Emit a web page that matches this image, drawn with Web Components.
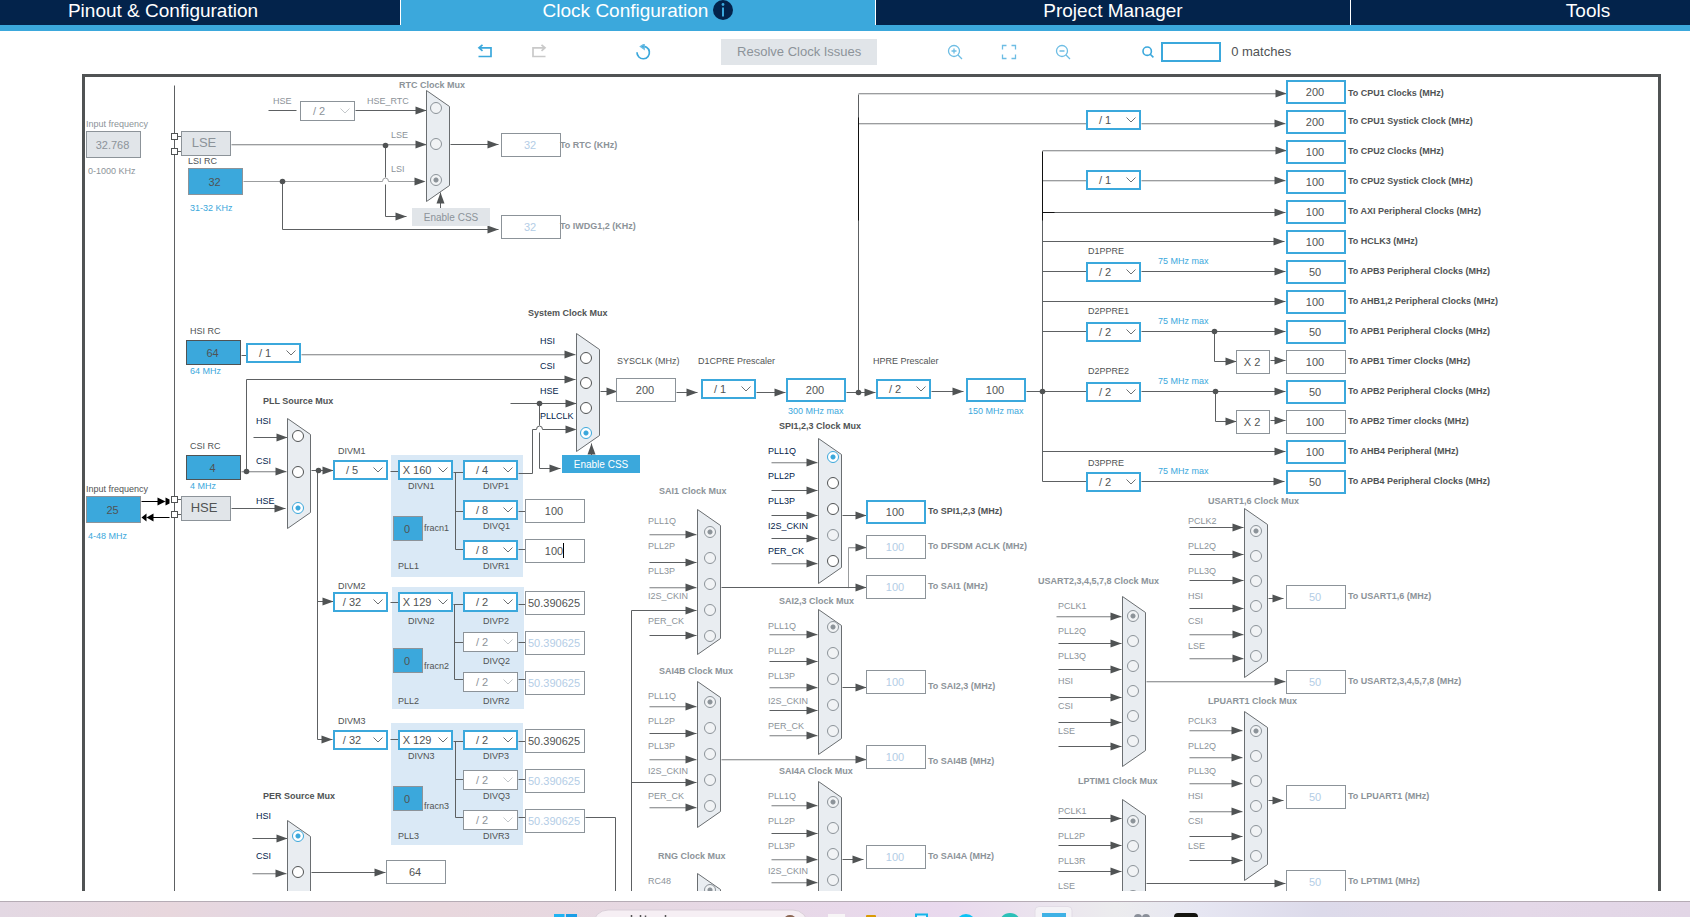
<!DOCTYPE html>
<html lang="en">
<head>
<meta charset="utf-8">
<title>Clock Configuration</title>
<style>
  body {
    margin: 0;
    height: 100vh;
    display: flex;
    flex-direction: column;
    overflow: hidden;
    background: #fff;
    font-family: "Liberation Sans", Arial, sans-serif;
    --navy: #03234b;
    --blue: #3ba8dc;
    --ink: #505354;
    --grey: #8c9399;
    --pale: #e1e5e9;
  }

  clock-diagram {
    flex: 1;
    min-height: 0;
  }

  task-bar {
    margin-top: 10px;
  }
</style>
</head>
<body>
  <clock-tabs>
    <clock-tab>Pinout &amp; Configuration</clock-tab>
    <clock-tab active info>Clock Configuration</clock-tab>
    <clock-tab>Project Manager</clock-tab>
    <clock-tab>Tools</clock-tab>
  </clock-tabs>
  <clock-toolbar></clock-toolbar>
  <clock-diagram></clock-diagram>
  <task-bar></task-bar>

<script>
// ---------------------------------------------------------------- tabs
class ClockTabs extends HTMLElement {
  constructor() {
    super();
    this.attachShadow({ mode: 'open' });
    // the tab strip is wider than the window and is scrolled a little
    this.shadowRoot.innerHTML = `
      <style>
        :host {
          display: block;
          flex: none;
          overflow: hidden;
          border-bottom: 6px solid var(--blue);
        }

        nav {
          display: grid;
          grid-template-columns: repeat(4, 1fr);
          width: calc(100% + 210px);
          height: 25px;
          margin-left: -74px;
        }
      </style>
      <nav aria-label="Configuration"><slot></slot></nav>
    `;
  }
}

class ClockTab extends HTMLElement {
  constructor() {
    super();
    this.attachShadow({ mode: 'open' });
    this.shadowRoot.innerHTML = `
      <style>
        :host {
          display: flex;
          border-right: 1px solid #fff;
          background: var(--navy);
        }

        :host([active]) {
          background: var(--blue);
        }

        button {
          flex: 1;
          display: flex;
          align-items: center;
          justify-content: center;
          gap: 5px;
          padding: 0 0 5px;
          border: 0;
          background: none;
          color: #fff;
          font: 19px/22px "Liberation Sans", Arial, sans-serif;
        }

        svg {
          display: none;
          margin-bottom: 2px;
        }

        :host([info]) svg {
          display: block;
        }
      </style>
      <button type="button">
        <span><slot></slot></span>
        <svg width="20" height="20" viewBox="0 0 20 20">
          <circle cx="10" cy="10" r="10" fill="#03234b"/>
          <circle cx="10" cy="4.5" r="1.4" fill="#3ba8dc"/>
          <path d="M10 7.5V16.5" stroke="#3ba8dc" stroke-width="2"/>
        </svg>
      </button>
    `;
  }
}

// ---------------------------------------------------------------- toolbar
const ICONS = {
  undo: '<path d="M2 3.8H14V12.5H1.5M5.5 .8L2 3.8L5.5 6.8" stroke="#3ba8dc" stroke-width="1.7"/>',
  redo: '<path d="M13 3.8H2V12.5H14.5M10.5 .8L14 3.8L10.5 6.8" stroke="#c9c9c9" stroke-width="1.7"/>',
  reset: '<path d="M6.5 2.6A6.2 6.2 0 1 1 2 8.3" stroke="#3ba8dc" stroke-width="1.7"/><path d="M9.2 0V5.2L5.4 2.6Z" fill="#3ba8dc"/>',
  zoomin: '<circle cx="7" cy="7" r="5.5"/><path d="M11 11L15 15M4.5 7H9.5M7 4.5V9.5"/>',
  fit: '<path d="M1.5 5.5V1.5H5.5M10.5 1.5H14.5V5.5M14.5 10.5V14.5H10.5M5.5 14.5H1.5V10.5"/>',
  zoomout: '<circle cx="7" cy="7" r="5.5"/><path d="M11 11L15 15M4.5 7H9.5"/>'
};

class IconButton extends HTMLElement {
  connectedCallback() {
    this.attachShadow({ mode: 'open' });
    this.shadowRoot.innerHTML = `
      <style>
        :host {
          display: block;
        }

        button {
          display: flex;
          justify-content: center;
          width: 22px;
          padding: 3px 0;
          border: 0;
          background: none;
        }
      </style>
      <button type="button" aria-label="${this.getAttribute('icon')}">
        <svg width="16" height="16" viewBox="0 0 16 16" fill="none" stroke="#6dbde4" stroke-width="1.3">
          ${ICONS[this.getAttribute('icon')]}
        </svg>
      </button>
    `;
  }
}

class ClockToolbar extends HTMLElement {
  constructor() {
    super();
    this.attachShadow({ mode: 'open' });
    this.shadowRoot.innerHTML = `
      <style>
        :host {
          flex: none;
          display: flex;
          align-items: center;
          gap: 67px;
          box-sizing: border-box;
          height: 42px;
          padding: 0 0 1px calc(28% + 1px);
          font-size: 13px;
          line-height: 16px;
          color: var(--ink);
        }

        .group {
          display: flex;
          gap: 32px;
        }

        .history {
          margin-right: 15px;
        }

        .resolve {
          width: 156px;
          height: 26px;
          padding: 0;
          border: 0;
          background: var(--pale);
          color: var(--grey);
          font: inherit;
        }

        .search {
          display: flex;
          align-items: center;
          gap: 10px;
        }

        .box {
          display: flex;
          align-items: center;
          gap: 7px;
        }

        label {
          display: flex;
        }

        input {
          box-sizing: border-box;
          width: 60px;
          height: 20px;
          margin: 0;
          padding: 0 4px;
          border: 2px solid var(--blue);
          border-radius: 0;
          font: inherit;
        }
      </style>
      <div class="group history">
        <icon-button icon="undo"></icon-button>
        <icon-button icon="redo"></icon-button>
      </div>
      <icon-button icon="reset"></icon-button>
      <button type="button" class="resolve" disabled>Resolve Clock Issues</button>
      <div class="group">
        <icon-button icon="zoomin"></icon-button>
        <icon-button icon="fit"></icon-button>
        <icon-button icon="zoomout"></icon-button>
      </div>
      <div class="search">
        <div class="box">
          <label for="find" aria-label="Search">
            <svg width="13" height="12" viewBox="0 0 13 12" fill="none" stroke="#3ba8dc" stroke-width="1.6">
              <circle cx="6.2" cy="5.2" r="4.2"/><path d="M9 8L12.4 11.4"/>
            </svg>
          </label>
          <input id="find" type="text">
        </div>
        <span>0 matches</span>
      </div>
    `;
  }
}

// ---------------------------------------------------------------- diagram parts

// shared by every part that carries captions around its box
const CAPTION_STYLE = `
  :host {
    position: absolute;
    display: block;
  }

  .caption {
    position: absolute;
    font-size: 9px;
    line-height: 12px;
    white-space: nowrap;
    color: var(--ink);
  }

  .bold {
    font-weight: bold;
  }

  .note {
    color: var(--blue);
  }

  .off {
    color: var(--grey);
  }
`;

// each part gets a config object before it is added to the sheet:
// { x, y, value, label: [text, x, y], note: [text, x, y], off, ... }
// label and note positions are sheet positions, y being the middle of the line
class SheetPart extends HTMLElement {
  connectedCallback() {
    if (this.shadowRoot) return;
    this.attachShadow({ mode: 'open' });
    this.shadowRoot.innerHTML = `<style>${CAPTION_STYLE}</style>` + this.markup(this.config);
  }

  caption(entry, classes, forId) {
    if (!entry) return '';
    const { x, y } = this.config;
    const tag = forId ? 'label' : 'span';
    return `<${tag} class="caption ${classes}" ${forId ? `for="${forId}"` : ''}
      style="left:${entry[1] - x}px;top:${entry[2] - 6 - y}px">${entry[0]}</${tag}>`;
  }
}

class ClockField extends SheetPart {
  markup(c) {
    const kind = c.kind || 'plain';
    return `
      <style>
        input {
          display: block;
          box-sizing: border-box;
          width: ${c.w || 60}px;
          height: ${c.h || 24}px;
          margin: 0;
          padding: 0 2px 0 0;
          border: 1px solid var(--grey);
          border-radius: 0;
          background: #fff;
          color: var(--ink);
          font: 11px/16px "Liberation Sans", Arial, sans-serif;
          text-align: center;
        }

        .live {
          border: 2px solid var(--blue);
        }

        .source {
          background: var(--blue);
        }

        .dark {
          border-color: var(--ink);
        }

        .idle {
          color: #b3cde6;
        }

        .shut {
          background: var(--pale);
          color: var(--grey);
        }

        .caret {
          position: absolute;
          left: 38px;
          top: 4px;
          width: 1px;
          height: 15px;
          background: #000;
        }
      </style>
      <input id="value" type="text" class="${kind}" value="${c.value}"
        ${c.label ? '' : 'aria-label="frequency"'} ${c.off ? 'disabled' : ''}>
      ${this.caption(c.label, (c.bold ? 'bold ' : '') + (c.off ? 'off' : ''), 'value')}
      ${this.caption(c.note, c.off ? 'off' : 'note')}
      ${c.caret ? '<i class="caret"></i>' : ''}
    `;
  }
}

class ClockDivider extends SheetPart {
  markup(c) {
    return `
      <style>
        select {
          display: block;
          box-sizing: border-box;
          width: 55px;
          height: 20px;
          margin: 0;
          padding: 1px 17px 0 0;
          appearance: none;
          border: 2px solid var(--blue);
          border-radius: 0;
          background: #fff;
          color: var(--ink);
          font: 11px/15px "Liberation Sans", Arial, sans-serif;
          text-align: center;
          text-align-last: center;
        }

        select:disabled {
          border: 1px solid var(--grey);
          color: var(--grey);
          opacity: 1;
        }

        svg {
          position: absolute;
          left: 40px;
          top: 7px;
          pointer-events: none;
        }
      </style>
      <select id="value" ${c.label ? '' : 'aria-label="divider"'} ${c.off ? 'disabled' : ''}>
        <option>${c.value}</option>
      </select>
      <svg width="10" height="6" viewBox="0 0 10 6">
        <path d="M.5 .5L5 5L9.5 .5" fill="none" stroke="${c.off ? '#c4c8cb' : '#6d7072'}"/>
      </svg>
      ${this.caption(c.label, c.labelOff ? 'off' : '', 'value')}
      ${this.caption(c.note, 'note')}
    `;
  }
}

class ClockButton extends SheetPart {
  markup(c) {
    return `
      <style>
        button {
          display: block;
          width: ${c.w}px;
          height: ${c.h}px;
          box-sizing: border-box;
          padding: 2px 0 0;
          border: 0;
          background: var(--pale);
          color: var(--grey);
          font: 10px/14px "Liberation Sans", Arial, sans-serif;
        }

        .live {
          background: var(--blue);
          color: #fff;
        }

        .source {
          padding: 0 4px 2px 0;
          border: 1px solid var(--grey);
          font-size: 13px;
        }

        .dark {
          color: var(--ink);
        }
      </style>
      <button type="button" class="${c.kind || ''}">${c.value}</button>
    `;
  }
}

class ClockLabel extends SheetPart {
  markup(c) {
    return `<span class="caption" style="top:-6px">${c.value}</span>`;
  }
}

class ClockMux extends SheetPart {
  markup(c) {
    const h = c.h;
    const { step, first, cx } = c.radio;
    const rows = c.inputs.map((text, i) => {
      const dead = c.off || c.dead === i;
      return `
        <input type="radio" name="source" id="in${i}" class="${dead ? 'dead' : ''}"
          style="left:${cx - 6 - c.x}px;top:${first + step * i - 6 - c.y}px"
          ${c.picked === i ? 'checked' : ''}>
        ${this.caption([text, c.textX[i] || c.textX[0], c.textY[0] + c.textY[1] * i], c.off ? 'off' : 'name', 'in' + i)}
      `;
    }).join('');
    return `
      <style>
        svg {
          display: block;
          overflow: visible;
        }

        input {
          position: absolute;
          box-sizing: border-box;
          appearance: none;
          width: 12px;
          height: 12px;
          margin: 0;
          border: 1px solid var(--ink);
          border-radius: 50%;
          background: #fff;
        }

        input:checked {
          border-color: var(--blue);
          background: radial-gradient(circle, var(--blue) 2px, #fff 3px);
        }

        input.dead {
          border-color: var(--grey);
          background: #f1f3f5;
        }

        input.dead:checked {
          background: radial-gradient(circle, var(--grey) 2px, #f1f3f5 3px);
        }

        .name {
          color: var(--navy);
        }
      </style>
      <svg width="24" height="${h}">
        <path d="M.5 .5L23.5 16.5V${h - 16.5}L.5 ${h - .5}Z" fill="#e9edf1" stroke="#6a6e71"/>
      </svg>
      ${rows}
      ${this.caption(c.title, 'bold ' + (c.off ? 'off' : ''))}
    `;
  }
}

// ---------------------------------------------------------------- diagram data

const BLOCKS = [[391, 455], [392, 587], [391, 723]];

// points of a line; a trailing > puts an arrow head on the last point
const WIRES = [
  // crystal pins
  '174,85 174,892', '177,136 181,136', '177,151 181,151', '177,499 181,499', '177,514 181,514',
  // low speed clocks
  '268,110 296,110', '355,110 426,110 >', '385,145 385,177', '385,184 385,216 406,216 >',
  '282,181 282,229 498,229 >', '450,144 498,144 >', '440,208 440,192 >',
  // high speed clocks
  '241,355 246,355', '246,471 246,379 575,379 >', '510,403 576,403 >',
  '539,403 539,425', '539,432 539,468 560,468 >', '591,455 591,443 >',
  '253,437 287,437 >', '231,508 285,508 >', '311,470 333,470 >',
  '317,470 317,739 332,739 >', '317,601 333,601 >',
  // pll 1
  '390,471 398,471', '453,472 463,472', '455,472 455,549 463,549', '455,511 463,511',
  '518,511 525,511', '518,549 525,549',
  // pll 2
  '390,602 398,602', '453,604 463,604', '454,604 454,679 463,679', '454,642 463,642',
  '518,604 525,604', '518,642 525,642', '518,679 525,679',
  // pll 3
  '390,739 398,739', '453,741 463,741', '455,741 455,817 463,817', '455,779 463,779',
  '518,741 525,741', '518,779 525,779', '518,817 525,817', '585,817 615,817 615,892',
  // system clock chain
  '600,391 617,391 >', '676,392 697,392 >', '756,392 785,392 >', '846,392 875,392 >',
  '931,391 963,391 >', '1026,391 1086,391', '858,392 858,94',
  '1042,481 1042,151', '1042,212 1285,212 >', '1042,241 1284,241 >',
  '1042,271 1086,271', '1141,271 1285,271 >', '1042,301 1285,301 >',
  '1042,331 1086,331', '1141,331 1285,331 >', '1214,331 1214,361 1236,361 >', '1270,360 1285,360 >',
  '1141,391 1285,391 >', '1215,391 1215,421 1236,421 >', '1270,420 1285,420 >',
  '1042,451 1285,451 >', '1042,481 1086,481', '1141,481 1284,481 >',
  // spi and sai inputs
  '771,490 817,490 >', '771,515 817,515 >', '771,538 817,538 >',
  '842,515 866,515 >', '649,562 696,562 >', '631,892 631,610 696,610 >', '649,635 696,635 >', '721,587 866,587 >',
  '649,733 696,733 >', '631,782 696,782 >',
  '769,661 817,661 >', '769,710 817,710 >', '771,833 817,833 >',
  '842,687 866,687 >', '842,859 863,859 >',
  // uart and timer inputs
  '1189,527 1243,527 >', '1189,554 1243,554 >', '1189,580 1243,580 >', '1189,608 1243,608 >',
  '1268,598 1283,598 >', '1058,643 1121,643 >', '1058,669 1121,669 >', '1058,697 1121,697 >',
  '1058,722 1121,722 >', '1058,746 1121,746 >', '1189,836 1242,836 >', '1189,860 1242,860 >',
  '1268,800 1283,800 >', '1058,818 1121,818 >', '1058,845 1121,845 >', '1058,871 1121,871 >',
  '1146,883 1285,883 >',
  // peripheral clock
  '252,838 287,838 >', '311,872 385,872 >'
];

// lines that fall between two pixel rows: a lighter stroke with a faint one below it
const SOFT_WIRES = [
  '231,144 426,144 >', '301,354 575,354 >', '241,471 286,471 >',
  '858,93 1286,93 >', '858,123 1086,123', '1141,123 1285,123 >',
  '1042,150 1286,150 >', '1042,180 1086,180', '1141,180 1285,180 >',
  '771,462 817,462 >', '771,563 817,563 >', '649,534 696,534 >', '649,587 696,587 >',
  '848,587 848,547 866,547 >', '649,706 696,706 >', '649,759 696,759 >', '649,807 696,807 >',
  '721,759 866,759 >', '769,634 817,634 >', '769,687 817,687 >', '769,735 817,735 >',
  '771,805 817,805 >', '771,859 817,859 >', '771,882 817,882 >',
  '1189,634 1243,634 >', '1189,658 1243,658 >', '1056,616 1121,616 >', '1146,681 1285,681 >',
  '1189,730 1242,730 >', '1189,757 1242,757 >', '1189,783 1242,783 >', '1189,811 1242,811 >',
  '252,873 286,873 >'
];

const DOTS = [
  [385, 145], [282, 181], [246, 471], [539, 403], [318, 470], [858, 392],
  [1042, 391], [1214, 331], [1215, 391]
];

const OUTPUTS = [
  ['200', 'To CPU1 Clocks (MHz)'],
  ['200', 'To CPU1 Systick Clock (MHz)'],
  ['100', 'To CPU2 Clocks (MHz)'],
  ['100', 'To CPU2 Systick Clock (MHz)'],
  ['100', 'To AXI Peripheral Clocks (MHz)'],
  ['100', 'To HCLK3 (MHz)'],
  ['50', 'To APB3 Peripheral Clocks (MHz)'],
  ['100', 'To AHB1,2 Peripheral Clocks (MHz)'],
  ['50', 'To APB1 Peripheral Clocks (MHz)'],
  ['100', 'To APB1 Timer Clocks (MHz)', 'plain'],
  ['50', 'To APB2 Peripheral Clocks (MHz)'],
  ['100', 'To APB2 Timer clocks (MHz)', 'plain'],
  ['100', 'To AHB4 Peripheral (MHz)'],
  ['50', 'To APB4 Peripheral Clocks (MHz)']
].map(([value, text, kind], i) => ({
  x: 1286, y: 80 + 30 * i, value, kind: kind || 'live', bold: true, label: [text, 1348, i ? 91 + 30 * i : 93]
}));

const idle = (x, y, value, text, labelX, labelY) =>
  ({ x, y, value, kind: 'idle', off: true, bold: true, label: [text, labelX, labelY] });

const FIELDS = [
  { x: 86, y: 131, w: 55, h: 27, value: '32.768', kind: 'shut', off: true, label: ['Input frequency', 86, 124], note: ['0-1000 KHz', 88, 171] },
  { x: 86, y: 496, w: 55, h: 27, value: '25', kind: 'source', label: ['Input frequency', 86, 489], note: ['4-48 MHz', 88, 536] },
  { x: 188, y: 168, w: 55, h: 27, value: '32', kind: 'source', label: ['LSI RC', 188, 161], note: ['31-32 KHz', 190, 208] },
  { x: 186, y: 340, w: 55, h: 25, value: '64', kind: 'source dark', label: ['HSI RC', 190, 331], note: ['64 MHz', 190, 371] },
  { x: 186, y: 455, w: 55, h: 25, value: '4', kind: 'source dark', label: ['CSI RC', 190, 446], note: ['4 MHz', 190, 486] },
  { x: 616, y: 378, value: '200', label: ['SYSCLK (MHz)', 617, 361] },
  { x: 786, y: 378, value: '200', kind: 'live', note: ['300 MHz max', 788, 411] },
  { x: 966, y: 378, value: '100', kind: 'live', note: ['150 MHz max', 968, 411] },
  { x: 1236, y: 350, w: 34, value: 'X 2' },
  { x: 1236, y: 410, w: 34, value: 'X 2' },
  { x: 386, y: 860, value: '64' },
  { x: 393, y: 516, w: 30, h: 25, value: '0', kind: 'source', label: ['fracn1', 424, 528] },
  { x: 393, y: 648, w: 30, h: 25, value: '0', kind: 'source', label: ['fracn2', 424, 666] },
  { x: 393, y: 786, w: 30, h: 25, value: '0', kind: 'source', label: ['fracn3', 424, 806] },
  { x: 525, y: 499, value: '100' },
  { x: 525, y: 539, value: '100', caret: true },
  { x: 525, y: 591, value: '50.390625' },
  { x: 525, y: 631, value: '50.390625', kind: 'idle', off: true },
  { x: 525, y: 671, value: '50.390625', kind: 'idle', off: true },
  { x: 525, y: 729, value: '50.390625' },
  { x: 525, y: 769, value: '50.390625', kind: 'idle', off: true },
  { x: 525, y: 809, value: '50.390625', kind: 'idle', off: true },
  ...OUTPUTS,
  { x: 866, y: 500, value: '100', kind: 'live', bold: true, label: ['To SPI1,2,3 (MHz)', 928, 511] },
  idle(501, 133, '32', 'To RTC (KHz)', 560, 145),
  idle(501, 215, '32', 'To IWDG1,2 (KHz)', 560, 226),
  idle(866, 535, '100', 'To DFSDM ACLK (MHz)', 928, 546),
  idle(866, 575, '100', 'To SAI1 (MHz)', 928, 586),
  idle(866, 670, '100', 'To SAI2,3 (MHz)', 928, 686),
  idle(866, 745, '100', 'To SAI4B (MHz)', 928, 761),
  idle(866, 845, '100', 'To SAI4A (MHz)', 928, 856),
  idle(1286, 585, '50', 'To USART1,6 (MHz)', 1348, 596),
  idle(1286, 670, '50', 'To USART2,3,4,5,7,8 (MHz)', 1348, 681),
  idle(1286, 785, '50', 'To LPUART1 (MHz)', 1348, 796),
  idle(1286, 870, '50', 'To LPTIM1 (MHz)', 1348, 881)
];

const DIVIDERS = [
  { x: 300, y: 101, value: '/ 2', off: true, labelOff: true, label: ['HSE', 273, 101] },
  { x: 246, y: 343, value: '/ 1' },
  { x: 701, y: 379, value: '/ 1', label: ['D1CPRE Prescaler', 698, 361] },
  { x: 876, y: 379, value: '/ 2', label: ['HPRE Prescaler', 873, 361] },
  { x: 1086, y: 110, value: '/ 1' },
  { x: 1086, y: 170, value: '/ 1' },
  { x: 1086, y: 262, value: '/ 2', label: ['D1PPRE', 1088, 251], note: ['75 MHz max', 1158, 261] },
  { x: 1086, y: 322, value: '/ 2', label: ['D2PPRE1', 1088, 311], note: ['75 MHz max', 1158, 321] },
  { x: 1086, y: 382, value: '/ 2', label: ['D2PPRE2', 1088, 371], note: ['75 MHz max', 1158, 381] },
  { x: 1086, y: 472, value: '/ 2', label: ['D3PPRE', 1088, 463], note: ['75 MHz max', 1158, 471] }
];

// the dividers of one pll: M before the block, N, P, Q and R inside it
function addPll(n, y, textY, m, mul, p, q, r, off) {
  DIVIDERS.push(
    { x: 333, y, value: m, label: ['DIVM' + n, 338, textY - 35] },
    { x: 398, y, value: mul, label: ['DIVN' + n, 408, textY] },
    { x: 463, y, value: p, label: ['DIVP' + n, 483, textY] },
    { x: 463, y: y + 40, value: q, off, label: ['DIVQ' + n, 483, textY + 40] },
    { x: 463, y: y + 80, value: r, off, label: ['DIVR' + n, 483, textY + 80] }
  );
}
addPll(1, 460, 486, '/ 5', 'X 160', '/ 4', '/ 8', '/ 8', false);
addPll(2, 592, 621, '/ 32', 'X 129', '/ 2', '/ 2', '/ 2', true);
addPll(3, 730, 756, '/ 32', 'X 129', '/ 2', '/ 2', '/ 2', true);

const LABELS = [
  { x: 398, y: 566, value: 'PLL1' },
  { x: 398, y: 701, value: 'PLL2' },
  { x: 398, y: 836, value: 'PLL3' }
];

const BUTTONS = [
  { x: 181, y: 131, w: 50, h: 25, value: 'LSE', kind: 'source' },
  { x: 181, y: 496, w: 50, h: 25, value: 'HSE', kind: 'source dark' },
  { x: 412, y: 208, w: 78, h: 18, value: 'Enable CSS' },
  { x: 562, y: 455, w: 78, h: 18, value: 'Enable CSS', kind: 'live' }
];

const SAI = ['PLL1Q', 'PLL2P', 'PLL3P', 'I2S_CKIN', 'PER_CK'];
const UART = ['PLL2Q', 'PLL3Q', 'HSI', 'CSI', 'LSE'];

const MUXES = [
  { x: 426, y: 90, h: 112, title: ['RTC Clock Mux', 399, 85], off: true, picked: 2,
    inputs: ['HSE_RTC', 'LSE', 'LSI'], textX: [367, 391, 391], textY: [101, 34], radio: { cx: 436, first: 108, step: 36 } },
  { x: 576, y: 333, h: 119, title: ['System Clock Mux', 528, 313], picked: 3,
    inputs: ['HSI', 'CSI', 'HSE', 'PLLCLK'], textX: [540], textY: [341, 25], radio: { cx: 586, first: 358, step: 25 } },
  { x: 287, y: 418, h: 111, title: ['PLL Source Mux', 263, 401], picked: 2,
    inputs: ['HSI', 'CSI', 'HSE'], textX: [256], textY: [421, 40], radio: { cx: 298, first: 436, step: 36 } },
  { x: 287, y: 820, h: 111, title: ['PER Source Mux', 263, 796], picked: 0,
    inputs: ['HSI', 'CSI'], textX: [256], textY: [816, 40], radio: { cx: 298, first: 836, step: 36 } },
  { x: 818, y: 438, h: 146, title: ['SPI1,2,3 Clock Mux', 779, 426], picked: 0, dead: 3,
    inputs: SAI, textX: [768], textY: [451, 25], radio: { cx: 833, first: 457, step: 26 } },
  { x: 697, y: 509, h: 146, title: ['SAI1 Clock Mux', 659, 491], off: true, picked: 0,
    inputs: SAI, textX: [648], textY: [521, 25], radio: { cx: 710, first: 532, step: 26 } },
  { x: 697, y: 681, h: 147, title: ['SAI4B Clock Mux', 659, 671], off: true, picked: 0,
    inputs: SAI, textX: [648], textY: [696, 25], radio: { cx: 710, first: 702, step: 26 } },
  { x: 818, y: 609, h: 146, title: ['SAI2,3 Clock Mux', 779, 601], off: true, picked: 0,
    inputs: SAI, textX: [768], textY: [626, 25], radio: { cx: 833, first: 627, step: 26 } },
  { x: 818, y: 781, h: 146, title: ['SAI4A Clock Mux', 779, 771], off: true, picked: 0,
    inputs: SAI.slice(0, 4), textX: [768], textY: [796, 25], radio: { cx: 833, first: 802, step: 26 } },
  { x: 697, y: 873, h: 111, title: ['RNG Clock Mux', 658, 856], off: true, picked: 0,
    inputs: ['RC48'], textX: [648], textY: [881, 25], radio: { cx: 710, first: 890, step: 26 } },
  { x: 1244, y: 508, h: 170, title: ['USART1,6 Clock Mux', 1208, 501], off: true, picked: 0,
    inputs: ['PCLK2', ...UART], textX: [1188], textY: [521, 25], radio: { cx: 1256, first: 531, step: 25 } },
  { x: 1122, y: 596, h: 171, title: ['USART2,3,4,5,7,8 Clock Mux', 1038, 581], off: true, picked: 0,
    inputs: ['PCLK1', ...UART], textX: [1058], textY: [606, 25], radio: { cx: 1133, first: 616, step: 25 } },
  { x: 1244, y: 711, h: 170, title: ['LPUART1 Clock Mux', 1208, 701], off: true, picked: 0,
    inputs: ['PCLK3', ...UART], textX: [1188], textY: [721, 25], radio: { cx: 1256, first: 731, step: 25 } },
  { x: 1122, y: 799, h: 171, title: ['LPTIM1 Clock Mux', 1078, 781], off: true, picked: 0,
    inputs: ['PCLK1', 'PLL2P', 'PLL3R', 'LSE'], textX: [1058], textY: [811, 25], radio: { cx: 1133, first: 821, step: 25 } }
];

// the sheet is scrolled up by this much under the toolbar
const SCROLL = 73;

function drawWire(text, color) {
  const parts = text.split(' ');
  const arrow = parts[parts.length - 1] === '>';
  if (arrow) parts.pop();
  let svg = `<polyline points="${parts.join(' ')}" stroke="${color}"/>`;
  if (arrow) {
    const [x, y] = parts[parts.length - 1].split(',').map(Number);
    const [px] = parts[parts.length - 2].split(',').map(Number);
    svg += px === x
      ? `<path class="head" d="M${x} ${y}l-4 11h8z"/>`
      : `<path class="head" d="M${x} ${y}l-11 -4v8z"/>`;
  }
  return svg;
}

class ClockDiagram extends HTMLElement {
  constructor() {
    super();
    this.attachShadow({ mode: 'open' });
    this.shadowRoot.innerHTML = `
      <style>
        :host {
          display: flex;
          position: relative;
          overflow: hidden;
        }

        .frame {
          flex: 1;
          margin: 1px 29px 0 82px;
          border: 3px solid var(--ink);
          border-bottom: 0;
        }

        svg {
          position: absolute;
          left: 0;
          top: 0;
          width: 100%;
          height: 100%;
        }

        polyline, .hop {
          fill: none;
        }

        .head {
          fill: #505354;
        }
      </style>
      <div class="frame"></div>
      <svg>
        <g transform="translate(0 ${-SCROLL})">
          ${BLOCKS.map(([x, y]) => `<rect x="${x}" y="${y}" width="132" height="122" fill="#dae9f6"/>`).join('')}
        </g>
        <g transform="translate(.5 ${1.5 - SCROLL})">
          ${SOFT_WIRES.map(w => drawWire(w.replace(' >', ''), '#dcdddd')).join('')}
        </g>
        <g transform="translate(.5 ${.5 - SCROLL})">
          ${SOFT_WIRES.map(w => drawWire(w, '#9b9d9f')).join('')}
          ${WIRES.map(w => drawWire(w, '#5d6062')).join('')}
          <path class="hop" d="M243 181H382A3 3.5 0 0 1 388 181H416" stroke="#9b9d9f"/>
          <path class="head" d="M425 181l-11 -4v8z"/>
          <path class="hop" d="M518 473H532V429H536A3 3.5 0 0 1 542 429H568" stroke="#5d6062"/>
          <path class="head" d="M576 429l-11 -4v8z"/>
          <path d="M858 117V220M1042 151V220M1042 212H1054" stroke="#111"/>
          ${DOTS.map(([x, y]) => `<circle cx="${x}" cy="${y}" r="2.8" fill="#505354"/>`).join('')}
          ${[136, 151, 499, 514].map(y => `<rect x="171" y="${y - 3}" width="6" height="6" fill="#fff" stroke="#505354"/>`).join('')}
          <path d="M141 501H158M152 517H169" stroke="#000"/>
          <path d="M157 497L165 501L157 505ZM165 497L169 499V503L165 505ZM141 517L146 513V521ZM146 517L153 513V521Z"/>
        </g>
      </svg>
    `;
    this._add('clock-mux', MUXES);
    this._add('clock-button', BUTTONS);
    this._add('clock-label', LABELS);
    this._add('clock-divider', DIVIDERS);
    this._add('clock-field', FIELDS);
  }

  _add(tag, list) {
    list.forEach(config => {
      const part = document.createElement(tag);
      part.config = config;
      part.style.left = config.x + 'px';
      part.style.top = config.y - SCROLL + 'px';
      this.shadowRoot.appendChild(part);
    });
  }
}

// ---------------------------------------------------------------- desktop task bar
class TaskBar extends HTMLElement {
  constructor() {
    super();
    this.attachShadow({ mode: 'open' });
    this.shadowRoot.innerHTML = `
      <style>
        :host {
          display: flex;
          flex: none;
          justify-content: center;
          height: 15px;
          overflow: hidden;
          border-top: 1px solid #b5acb5;
          background: linear-gradient(90deg, #e3d8e3, #e8d7dd 10%, #e4d7e3 16%, #e8d7dd 26%, #e6d8e2 38%,
            #e9d9ee 56%, #ececee 66%, #e6e6f2 71%, #dcdaea 78%, #e4d8e8 90%, #e2d6e6);
        }
      </style>
      <svg width="710" height="15" viewBox="0 0 710 15">
        <path d="M64 12h10.500v3h-10.500z" fill="#1fb3f2"/><path d="M76 12h11v3h-11z" fill="#1a9de6"/>
        <rect x="103" y="8" width="215" height="30" rx="15" fill="#f6eff4" stroke="#d9cfd8"/>
        <path d="M141.500 13v2M150.500 13v2M155.500 13.500v2M175.500 13v2" stroke="#555" stroke-width="1.5"/>
        <ellipse cx="300" cy="18" rx="6" ry="5" fill="#8a6552"/>
        <rect x="338" y="12" width="17" height="6" fill="#f7f5f6"/>
        <rect x="376" y="13" width="10" height="5" rx="1" fill="#d99a05"/>
        <rect x="426" y="12.500" width="11" height="6" fill="#e8f6ff" stroke="#15b5ea" stroke-width="2"/>
        <circle cx="476" cy="22" r="10" fill="#0cc3f5"/>
        <circle cx="520" cy="22" r="11" fill="#2bc0b8"/>
        <rect x="545" y="4.500" width="37" height="30" rx="4" fill="#f4f2f6" stroke="#e2dce6"/>
        <rect x="552" y="11" width="24" height="8" fill="#3fb1e5"/>
        <circle cx="648" cy="16" r="4" fill="#8a8f99"/><circle cx="656" cy="16" r="4" fill="#8a8f99"/>
        <rect x="684" y="11" width="24" height="20" rx="4" fill="#14140f"/>
      </svg>
    `;
  }
}

customElements.define('clock-tabs', ClockTabs);
customElements.define('clock-tab', ClockTab);
customElements.define('icon-button', IconButton);
customElements.define('clock-toolbar', ClockToolbar);
customElements.define('clock-field', ClockField);
customElements.define('clock-divider', ClockDivider);
customElements.define('clock-button', ClockButton);
customElements.define('clock-label', ClockLabel);
customElements.define('clock-mux', ClockMux);
customElements.define('clock-diagram', ClockDiagram);
customElements.define('task-bar', TaskBar);
</script>
</body>
</html>
